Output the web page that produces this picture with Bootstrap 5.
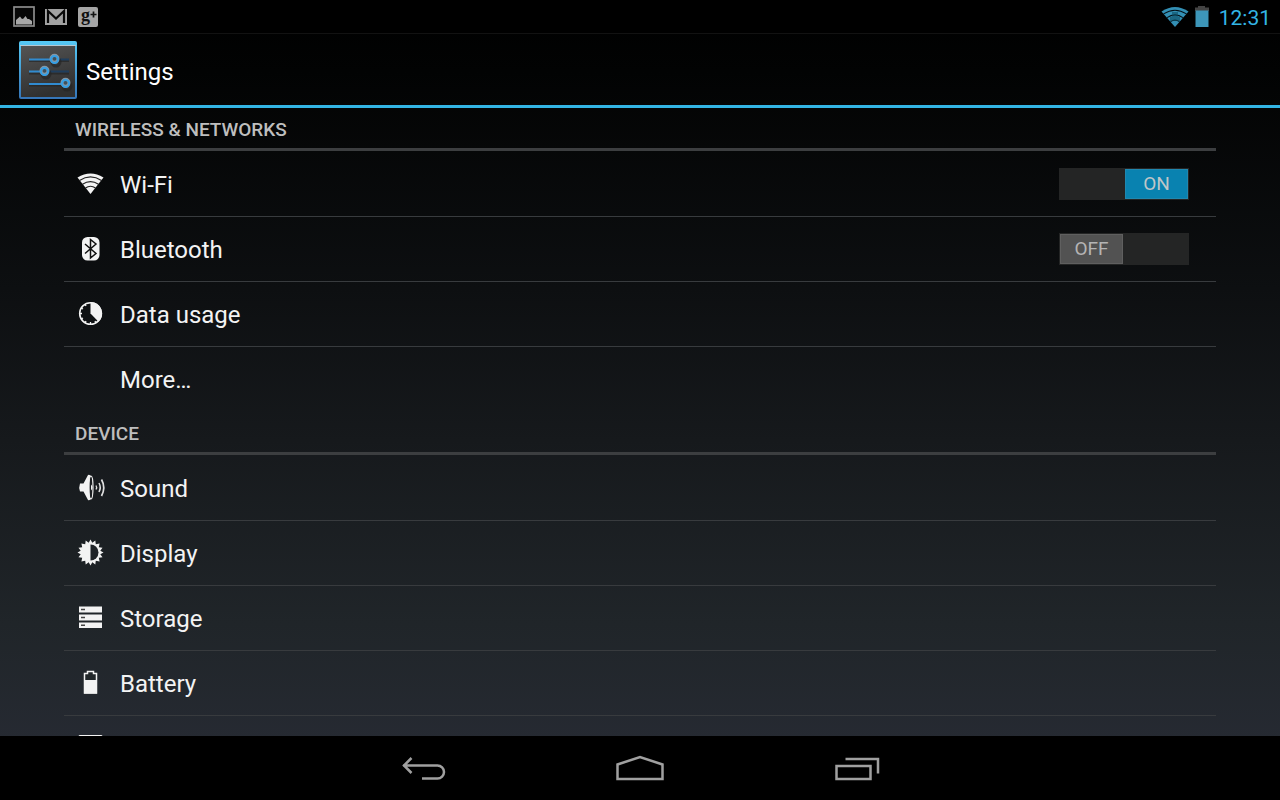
<!DOCTYPE html>
<html lang="en" data-bs-theme="dark">
<head>
<meta charset="utf-8">
<meta name="viewport" content="width=device-width, initial-scale=1">
<title>Settings</title>
<link href="https://cdn.jsdelivr.net/npm/bootstrap@5.3.0/dist/css/bootstrap.min.css" rel="stylesheet">
<style>
  body { font-family: Roboto, "Liberation Sans", sans-serif; color: #f3f3f3; background: #000; }
  svg { display: block; flex: none; }
  .screen { background: linear-gradient(#000 0, #020303 9%, #0d0f11 36%, #16191c 55%, #202529 78%, #272b34 96%, #282c36 100%); }
  .status-bar { height: 34px; background: #000; border-bottom: 1px solid #121212; padding: 0 9px 0 12px; }
  .clock { color: #33b5e5; font-size: 21px; line-height: 32px; padding-top: 2px; }
  .action-bar { height: 74px; padding: 0 18px; border-bottom: 3px solid #33b5e5; }
  .action-bar h1 { font-size: 24px; line-height: 32px; padding-top: 4px; }
  .settings-list { padding: 0 5%; min-height: 0; }
  .category + .category { margin-top: 1px; }
  .category h2 { height: 43px; padding: 3px 11px 0; border-bottom: 3px solid #3c3e40; font-size: 19px; line-height: 38px; font-weight: 500; color: #bebebe; }
  .entry { height: 65px; padding: 0 27px 0 11px; gap: 13px; font-size: 24px; line-height: 32px; }
  .entry + .entry { border-top: 1px solid #383b3e; }
  .entry a { color: #f3f3f3; padding-top: 2px; }
  .entry-icon { width: 32px; height: 32px; }
  .toggle { display: grid; grid-template-columns: 1fr 1fr; width: 130px; height: 32px; cursor: pointer; }
  .toggle input { appearance: none; grid-area: 1 / 1 / 2 / 3; margin: 0; width: 100%; height: 100%; background: #242525; cursor: pointer; }
  .toggle span { grid-area: 1 / 1; z-index: 1; margin: 1px; border: 1px solid #5f5f5f; background: #525252; color: #b4b4b4; font-size: 19px; line-height: 28px; text-align: center; pointer-events: none; }
  .toggle .thumb-on { grid-area: 1 / 2; display: none; background: #0982b0; border-color: #2088b0; color: #c0c6c8; }
  .toggle input:checked ~ .thumb-on { display: block; }
  .toggle input:checked ~ .thumb-off { display: none; }
  .nav-keys { height: 64px; background: #000; padding-top: 6px; }
  .nav-key { width: 217px; border: 0; background: none; color: #a0a0a0; }
</style>
</head>
<body>
<div class="screen d-flex flex-column vh-100 overflow-hidden">
  <header class="flex-shrink-0">
    <div class="status-bar d-flex align-items-center justify-content-between">
      <div class="d-flex" style="gap:8px">
        <svg width="24" height="24" viewBox="0 0 24 24" role="img" aria-label="Screenshot saved"><rect x="2" y="2" width="20" height="19" fill="#070707" stroke="#8c8c8c" stroke-width="1.700"/><path d="M4 19.500v-4.500l4-3.500 2 2.500 1.500-.5 2-2.500 2 3h1.500l3 2v3.500z" fill="#a8a8a8"/></svg>
        <svg width="24" height="24" viewBox="0 0 24 24" role="img" aria-label="Mail"><rect x="1" y="4" width="22" height="16" fill="#a2a2a2"/><path d="M4 18V6l8 7.500L20 6v12" fill="none" stroke="#080808" stroke-width="2.200"/></svg>
        <svg width="24" height="24" viewBox="0 0 24 24" role="img" aria-label="Social"><rect x="2" y="2" width="20" height="20" rx="2" fill="#a5a5a5"/><text x="5" y="16" font-family="Liberation Serif, serif" font-weight="700" font-size="18" fill="#111">g</text><path d="M17.500 6.500v6M14.500 9.500h6" stroke="#111" stroke-width="1.700"/></svg>
      </div>
      <div class="d-flex align-items-center">
        <svg width="28" height="24" viewBox="0 0 28 24" role="img" aria-label="Wi-Fi signal"><path d="M.5 6.500Q14-2.500 27.500 6.500L14 22z" fill="#338fb4"/><g fill="none" stroke="#041118" stroke-width="1.100"><path d="M2.500 8.900Q14 1.500 25.500 8.900M6 12.600Q14 7.200 22 12.600M9.500 16.600q4.500-3 9 0"/></g><path d="M11 7h6v5h2v4H9v-4h2z" fill="#0b4c63" opacity=".6"/></svg>
        <svg class="ms-1" width="18" height="24" viewBox="0 0 18 24" role="img" aria-label="Battery level"><path d="M2 2.500h3V1h7v1.500h4V6H2z" fill="#444"/><path d="M2.500 5.500h13V22h-13z" fill="#3d96b9"/></svg>
        <time class="clock ms-2">12:31</time>
      </div>
    </div>
    <div class="action-bar d-flex align-items-center">
      <svg width="60" height="60" viewBox="0 0 60 60" aria-hidden="true">
        <defs><linearGradient id="plate" x2=".3" y2="1"><stop stop-color="#555"/><stop offset="1" stop-color="#303030"/></linearGradient><linearGradient id="rim" x2="0" y2="1"><stop stop-color="#55c9f5"/><stop offset="1" stop-color="#3575b8"/></linearGradient></defs>
        <rect x="1" y="1" width="58" height="58" rx="2" fill="url(#rim)"/><rect x="3" y="5" width="54" height="52" fill="url(#plate)"/><path d="M2 5.500h56" stroke="#b4c8d2"/>
        <g stroke="#222" stroke-width="2" opacity=".6"><path d="M11 21h40M11 33.500h40M11 45.500h40"/></g>
        <path d="M40 19.500h11M31 31.500h20" stroke="#1f3e5e" stroke-width="2"/>
        <path d="M11 19.500h22M11 31.500h12M11 44h33" stroke="#318bd0" stroke-width="2"/>
        <g fill="#3d4549" stroke="#262626" stroke-width="3" opacity=".7"><circle cx="38" cy="22" r="4"/><circle cx="28" cy="34" r="4"/><circle cx="49" cy="46" r="4"/></g>
        <g fill="#41505a" stroke="#8597a5" stroke-width="3"><circle cx="36.500" cy="18.700" r="3.500"/><circle cx="26.500" cy="30.700" r="3.500"/><circle cx="47.500" cy="42.700" r="3.500"/></g>
        <g fill="none" stroke="#359fe5" stroke-width="2"><circle cx="36.500" cy="19.500" r="3.500"/><circle cx="26.500" cy="31.500" r="3.500"/><circle cx="47.500" cy="43.500" r="3.500"/></g>
      </svg>
      <h1 class="fw-normal mb-0 ms-2">Settings</h1>
    </div>
  </header>

  <main class="settings-list flex-grow-1 overflow-hidden">
    <section class="category">
      <h2 class="mb-0">WIRELESS &amp; NETWORKS</h2>
      <ul class="list-unstyled mb-0">
        <li class="entry d-flex align-items-center">
          <svg class="entry-icon" viewBox="0 0 32 32" aria-hidden="true"><path d="M2.500 9.500Q15.500 1.500 28.500 9.500L15.500 26z" fill="#f3f3f3"/><g fill="none" stroke="#222" stroke-width="1.200"><path d="M4.500 12.400Q15.500 5.500 26.500 12.400M7.500 16.200Q15.500 11 23.500 16.200M10.500 20q5-3.500 10 0"/></g></svg>
          <a href="#wifi" class="text-decoration-none flex-grow-1">Wi-Fi</a>
          <label class="toggle"><input type="checkbox" role="switch" aria-label="Wi-Fi" checked><span class="thumb-off">OFF</span><span class="thumb-on">ON</span></label>
        </li>
        <li class="entry d-flex align-items-center">
          <svg class="entry-icon" viewBox="0 0 32 32" aria-hidden="true"><rect x="7" y="4" width="17.500" height="23.500" rx="5.500" fill="#f3f3f3"/><path d="M10 11l11 9.500-5.500 4.500V6.500l5.500 4.500-11 9.500" fill="none" stroke="#111" stroke-width="1.500"/></svg>
          <a href="#bluetooth" class="text-decoration-none flex-grow-1">Bluetooth</a>
          <label class="toggle"><input type="checkbox" role="switch" aria-label="Bluetooth"><span class="thumb-off">OFF</span><span class="thumb-on">ON</span></label>
        </li>
        <li class="entry d-flex align-items-center">
          <svg class="entry-icon" viewBox="0 0 32 32" aria-hidden="true"><circle cx="15.500" cy="15.500" r="10.800" fill="none" stroke="#f3f3f3" stroke-width="1.600"/><path d="M15.500 4a11.500 11.500 0 0 1 8 19.800l-8-8.300z" fill="#f3f3f3"/><path d="M4.500 15.500h2.500M15.500 24v2.500M10 6l1 2M6 10l2 1M6 21l2-1M10 25l1-2M21 25l-1-2" stroke="#f3f3f3" stroke-width="1.300"/></svg>
          <a href="#data" class="text-decoration-none flex-grow-1">Data usage</a>
        </li>
        <li class="entry d-flex align-items-center">
          <span class="entry-icon"></span>
          <a href="#more" class="text-decoration-none flex-grow-1">More…</a>
        </li>
      </ul>
    </section>
    <section class="category">
      <h2 class="mb-0">DEVICE</h2>
      <ul class="list-unstyled mb-0">
        <li class="entry d-flex align-items-center">
          <svg class="entry-icon" viewBox="0 0 32 32" aria-hidden="true"><path d="M5 11.500H8.500L13 3q3-1.500 5 6v13q-2 7.500-5 6l-4.500-8.500H5q-1.500-4 0-8z" fill="#f3f3f3"/><ellipse cx="16" cy="15.500" rx="2" ry="11.500" fill="#1b1e21" stroke="#f3f3f3" stroke-width="1.200"/><path d="M16 12.500q3 3 0 6z" fill="#f3f3f3"/><g fill="none" stroke="#e0e0e0"><path d="M21 13.500q1.300 2 0 4" stroke-width="1.300"/><path d="M24 11q2.500 4.500 0 9" stroke-width="1.500"/><path d="M26.500 7.500q4.500 8 0 16.500" stroke-width="1.700"/></g></svg>
          <a href="#sound" class="text-decoration-none flex-grow-1">Sound</a>
        </li>
        <li class="entry d-flex align-items-center">
          <svg class="entry-icon" viewBox="0 0 32 32" aria-hidden="true"><path d="M15.500 2.500l1.800 3.200 3-2.200.5 3.700 3.800-.8-.8 3.800 3.700.5-2.200 3 3.200 1.800-3.200 1.800 2.200 3-3.700.5.8 3.800-3.800-.8-.5 3.700-3-2.200-1.800 3.200-1.800-3.200-3 2.200-.5-3.700-3.800.8.800-3.800-3.700-.5 2.200-3-3.200-1.800 3.200-1.800-2.200-3 3.700-.5-.8-3.800 3.800.8.500-3.700 3 2.200z" fill="#f3f3f3"/><path d="M15.500 7.500a8 8 0 0 1 0 16z" fill="#202428"/></svg>
          <a href="#display" class="text-decoration-none flex-grow-1">Display</a>
        </li>
        <li class="entry d-flex align-items-center">
          <svg class="entry-icon" viewBox="0 0 32 32" aria-hidden="true"><path d="M4 4.500h23v6H4zM4 12.500h23v6H4zM4 20.500h23v5.500H4z" fill="#f3f3f3"/><path d="M6 7.500h4M6 15.500h4M6 23.300h4" stroke="#444" stroke-width="1.600"/></svg>
          <a href="#storage" class="text-decoration-none flex-grow-1">Storage</a>
        </li>
        <li class="entry d-flex align-items-center">
          <svg class="entry-icon" viewBox="0 0 32 32" aria-hidden="true"><path d="M9.500 6.500h3v-2h6v2h3v19.500h-12z" fill="#22272a" stroke="#f3f3f3" stroke-width="1.500"/><path d="M9 13h13v13.500H9z" fill="#f3f3f3"/></svg>
          <a href="#battery" class="text-decoration-none flex-grow-1">Battery</a>
        </li>
        <li class="entry d-flex align-items-center">
          <a href="#apps" class="p-0" aria-label="Apps"><svg class="entry-icon" viewBox="0 0 32 32" aria-hidden="true"><rect x="3.500" y="3" width="24" height="25" rx="1.500" fill="#f3f3f3"/><path d="M7 7h17v7H7zM7 17h17v7H7z" fill="#272b34"/></svg></a>
        </li>
      </ul>
    </section>
  </main>

  <nav class="nav-keys d-flex justify-content-center flex-shrink-0" aria-label="System">
    <button type="button" class="nav-key d-flex align-items-center justify-content-center p-0" aria-label="Back"><svg width="48" height="32" viewBox="0 0 48 32" fill="none" stroke="currentColor" stroke-width="2.500"><path d="M4 10.500h34.500a6.500 6.500 0 0 1 0 13H23M12.500 3l-7.500 7.500 7.500 7.500"/></svg></button>
    <button type="button" class="nav-key d-flex align-items-center justify-content-center p-0" aria-label="Home"><svg width="48" height="32" viewBox="0 0 48 32" fill="none" stroke="currentColor" stroke-width="2.500"><path d="M1.500 24V9.500L24 2l22.500 7.500V24z"/></svg></button>
    <button type="button" class="nav-key d-flex align-items-center justify-content-center p-0" aria-label="Recent apps"><svg width="48" height="32" viewBox="0 0 48 32" fill="none" stroke="currentColor" stroke-width="2.500"><path d="M3.500 11h34v13h-34zM12.500 4h32.500v14.500"/></svg></button>
  </nav>
</div>
<script src="https://cdn.jsdelivr.net/npm/bootstrap@5.3.0/dist/js/bootstrap.bundle.min.js"></script>
</body>
</html>
